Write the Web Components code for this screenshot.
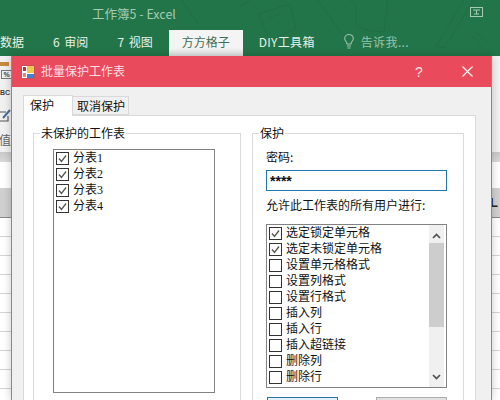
<!DOCTYPE html>
<html>
<head>
<meta charset="utf-8">
<title>批量保护工作表</title>
<style>
  html, body { margin: 0; height: 400px; overflow: hidden; background: #fff; }
  body { font-family: "Noto Sans CJK SC", sans-serif; position: relative; }
</style>
</head>
<body>
<excel-shell></excel-shell>
<protect-dialog>
  <win-group slot="left" label="未保护的工作表">
    <check-list style="--w:162px;--h:244px">
      <check-row checked>分表1</check-row>
      <check-row checked>分表2</check-row>
      <check-row checked>分表3</check-row>
      <check-row checked>分表4</check-row>
    </check-list>
  </win-group>
  <win-group slot="right" label="保护">
    <password-panel></password-panel>
  </win-group>
</protect-dialog>

<script>
class ExcelShell extends HTMLElement {
  constructor() {
    super();
    this.attachShadow({mode: 'open'}).innerHTML = `
      <style>
      :host { display: block; height: 400px; background: #fff; overflow: hidden; }
      .top { position: relative; height: 56px; background: #227548; overflow: hidden; font-size: 12px; }
      .doodle { position: absolute; inset: 0; }
      .title { height: 30px; line-height: 28px; padding-left: 92px; font-size: 12.5px; color: #a5cbb4; position: relative; }
      .opt { position: absolute; left: 470px; top: 7px; }
      .tabs { display: flex; height: 26px; position: relative; align-items: stretch; }
      .tab { display: flex; align-items: center; justify-content: center; padding-bottom: 4px; box-sizing: border-box; color: #e6f1ea; white-space: nowrap; word-spacing: 2px; }
      .on { background: linear-gradient(#f4f4f4 70%, #dedede); color: #3f6e55; width: 74px; }
      .tell { color: #9cc3ac; gap: 7px; letter-spacing: .4px; }
      .ribbon { height: 96px; background: #f1f1f1; position: relative; font-size: 12px; color: #666; }
      .ribbon > * { position: absolute; }
      .chip { left: 0; top: 6px; width: 9px; height: 4px; background: #c98a3c; }
      .pct { left: 1px; top: 14px; width: 9px; height: 7px; border: 1px solid #777; font: 700 7px/7px "Liberation Sans", sans-serif; color: #444; text-align: center; }
      .abc { left: 0; top: 32px; font: 700 7px/10px "Liberation Sans", sans-serif; color: #444; }
      .num { right: 489px; top: 76px; white-space: nowrap; line-height: 16px; }
      .band { height: 10px; background: linear-gradient(#c9c9c9, #d9d9d9); }
      .blank { height: 26px; }
      .head { height: 30px; background: #d0d0d0; border-bottom: 1px solid #8a8a8a; box-sizing: border-box; display: flex; justify-content: flex-end; align-items: center; font: 700 13px "Liberation Sans", sans-serif; color: #222; padding: 0 2px 0 0; }
      .rows { height: 182px; background: repeating-linear-gradient(#fff 0 18px, #d4d4d4 18px 19px); }
      </style>
      <div class="top">
        <svg class="doodle" width="500" height="56" fill="none" stroke="#206f44" stroke-width="1">
          <path d="M182 0 L198 24 M240 6 L250 0"/>
          <path d="M258 14 L290 4 L296 28 L270 40 Z M268 18 L280 14"/>
          <path d="M318 0 L346 40 M350 0 L356 6 V24 Q358 30 384 32 L388 0"/>
          <path d="M436 46 L464 0 M444 48 L474 0 M436 46 L444 48"/>
          <path d="M470 34 L482 46 M476 32 L486 42"/>
        </svg>
        <div class="title">工作簿5 - Excel</div>
        <svg class="opt" width="13" height="10" fill="none" stroke="#a5cbb4"><rect x=".5" y=".5" width="12" height="9"/><path d="M3 3 H10 M6.500 3 V7 M4 7 H9"/></svg>
        <div class="tabs">
          <div class="tab">数据</div>
          <div class="tab" style="margin-left:29px">6 审阅</div>
          <div class="tab" style="margin-left:29px">7 视图</div>
          <div class="tab on" style="margin-left:16px">方方格子</div>
          <div class="tab" style="margin-left:16px;letter-spacing:.3px">DIY工具箱</div>
          <div class="tab tell" style="margin-left:29px">
            <svg width="10" height="15" fill="none" stroke="#9cc3ac" stroke-width="1.1"><path d="M3 10 C3 7.500 .7 7 .7 4.500 A4.300 4 0 0 1 9.300 4.500 C9.300 7 7 7.500 7 10 Z"/><path d="M3 12 H7 M3.500 14 H6.500"/></svg>
            告诉我...
          </div>
        </div>
      </div>
      <div class="ribbon">
        <div class="chip"></div>
        <div class="pct">%</div>
        <div class="abc">BC</div>
        <svg style="left:0;top:52px" width="11" height="15" fill="none" stroke="#555" stroke-width="1.2"><path d="M0 4 H6 M0 13 H8 V8"/><path d="M3 10 L10 2" stroke="#4a6d94" stroke-width="2"/></svg>
        <div class="num">数值</div>
      </div>
      <div class="band"></div>
      <div class="blank"></div>
      <div class="head">L</div>
      <div class="rows"></div>
    `;
  }
}

class ProtectDialog extends HTMLElement {
  constructor() {
    super();
    this.attachShadow({mode: 'open'}).innerHTML = `
      <style>
      :host { position: absolute; left: 11px; top: 56px; width: 481px; height: 344px; background: #f0f0f0; border: solid #e5606e; border-width: 0 1px; box-sizing: border-box; display: block; font-size: 12px; color: #111; box-shadow: 0 0 8px rgba(0,0,0,.22); overflow: hidden; }
      .bar { height: 31px; background: #e94b5c; color: #fbdfe3; display: flex; align-items: center; padding-left: 9px; }
      .bar span { margin-left: 6px; flex: 1; padding-bottom: 2px; }
      .q { width: 14px; font: 400 14px "Liberation Sans", sans-serif; color: #fbe4e7; text-align: center; margin-right: 36px; }
      .x { margin-right: 18px; }
      .wrap { padding: 8px 15px 0 11px; }
      .tabs { display: flex; align-items: flex-end; height: 20px; }
      .t { box-sizing: border-box; border: 1px solid #d9d9d9; }
      .t.a { width: 50px; height: 21px; background: #fff; border-bottom: 0; position: relative; z-index: 1; margin-bottom: -1px; line-height: 18px; padding-left: 6px; }
      .t.b { width: 56px; height: 19px; background: #f0f0f0; border-left: 0; line-height: 18px; padding-left: 4px; }
      .pane { background: #fff; border: 1px solid #d9d9d9; border-bottom: 0; height: 285px; display: grid; grid-template-columns: 208px 212px; column-gap: 11px; padding: 17px 0 0 9px; box-sizing: border-box; }
      </style>
      <div class="bar">
        <svg width="14" height="14"><rect x=".5" y=".5" width="13" height="13" fill="#fff" stroke="#c8505c"/><rect x="2" y="2" width="3" height="4" fill="#c9303c"/><rect x="2" y="8" width="3" height="4" fill="#d88"/><rect x="6" y="1" width="7" height="7" fill="#f3c84a"/><rect x="6" y="9" width="7" height="4" fill="#4a7fd0"/></svg>
        <span>批量保护工作表</span>
        <div class="q">?</div>
        <svg class="x" width="11" height="11" fill="none" stroke="#fff" stroke-width="1.2"><path d="M.5 .5 L10.500 10.500 M10.500 .5 L.5 10.500"/></svg>
      </div>
      <div class="wrap">
        <div class="tabs"><div class="t a">保护</div><div class="t b">取消保护</div></div>
        <div class="pane"><slot name="left"></slot><slot name="right"></slot></div>
      </div>
    `;
  }
}

class WinGroup extends HTMLElement {
  constructor() {
    super();
    this.attachShadow({mode: 'open'}).innerHTML = `
      <style>
      :host { display: block; }
      .box { position: relative; border: 1px solid #d9d9d9; border-bottom: 0; height: 268px; box-sizing: border-box; padding: 15px 0 0 19px; }
      .cap { position: absolute; left: 6px; top: -8px; background: #fff; padding: 0 1px; line-height: 14px; }
      </style>
      <div class="box"><div class="cap"></div><slot></slot></div>
    `;
  }
  connectedCallback() {
    this.shadowRoot.querySelector('.cap').textContent = this.getAttribute('label');
  }
}

class CheckList extends HTMLElement {
  constructor() {
    super();
    this.attachShadow({mode: 'open'}).innerHTML = `
      <style>
      :host { display: block; box-sizing: border-box; width: var(--w); height: var(--h); border: 1px solid #828282; background: #fff; padding: 2px; position: relative; overflow: hidden; }
      </style>
      <slot></slot>
    `;
  }
}

class CheckRow extends HTMLElement {
  constructor() {
    super();
    this.attachShadow({mode: 'open'}).innerHTML = `
      <style>
      :host { display: flex; align-items: flex-start; height: 16px; gap: 4px; font-size: 12px; font-family: "Liberation Serif", "Noto Sans CJK SC", serif; color: #111; white-space: nowrap; }
      .c { width: 13px; height: 13px; border: 1px solid #333; box-sizing: border-box; background: #fff; flex: none; }
      .txt { line-height: 13px; }
      svg { display: block; }
      </style>
      <div class="c"></div><div class="txt"><slot></slot></div>
    `;
  }
  connectedCallback() {
    if (this.hasAttribute('checked')) {
      this.shadowRoot.querySelector('.c').innerHTML =
        '<svg width="11" height="11" fill="none" stroke="#555" stroke-width="1.3"><path d="M2 5.500 L4.500 8.500 L9 2.500"/></svg>';
    }
  }
}

class PasswordPanel extends HTMLElement {
  constructor() {
    super();
    const perms = ['选定锁定单元格', '选定未锁定单元格', '设置单元格格式', '设置列格式', '设置行格式', '插入列', '插入行', '插入超链接', '删除列', '删除行'];
    this.attachShadow({mode: 'open'}).innerHTML = `
      <style>
      :host { display: block; margin-left: -6px; font-size: 12px; }
      .l { line-height: 16px; }
      .inp { box-sizing: border-box; width: 181px; height: 21px; border: 1px solid #2177ad; background: #fff; margin: 5px 0 6px; padding: 1px 0 0 3px; font: 700 14px/19px "Liberation Sans", sans-serif; }
      check-list { margin-top: 11px; }
      .sb { position: absolute; right: 2px; top: 0; bottom: 0; width: 15px; background: #f0f0f0; }
      .th { position: absolute; left: 0; right: 0; top: 18px; height: 84px; background: #cdcdcd; }
      .sb svg { position: absolute; left: 3px; }
      .btns { display: flex; justify-content: space-between; width: 180px; margin: 9px 0 0 1px; }
      .btn { box-sizing: border-box; width: 71px; height: 24px; background: #e1e1e1; border: 1px solid #adadad; }
      .btn.d { border-color: #2177ad; background: #e5f1fb; }
      </style>
      <div class="l">密码:</div>
      <div class="inp">****</div>
      <div class="l">允许此工作表的所有用户进行:</div>
      <check-list style="--w:181px;--h:164px">
        ${perms.map((p, i) => `<check-row ${i < 2 ? 'checked' : ''}>${p}</check-row>`).join('')}
        <div class="sb">
          <svg style="top:8px" width="9" height="6" fill="none" stroke="#505050" stroke-width="1.7"><path d="M1 5 L4.500 1.500 L8 5"/></svg>
          <div class="th"></div>
          <svg style="bottom:7px" width="9" height="6" fill="none" stroke="#505050" stroke-width="1.7"><path d="M1 1 L4.500 4.500 L8 1"/></svg>
        </div>
      </check-list>
      <div class="btns"><div class="btn d"></div><div class="btn"></div></div>
    `;
  }
}

customElements.define('excel-shell', ExcelShell);
customElements.define('protect-dialog', ProtectDialog);
customElements.define('win-group', WinGroup);
customElements.define('check-list', CheckList);
customElements.define('check-row', CheckRow);
customElements.define('password-panel', PasswordPanel);
</script>
</body>
</html>
